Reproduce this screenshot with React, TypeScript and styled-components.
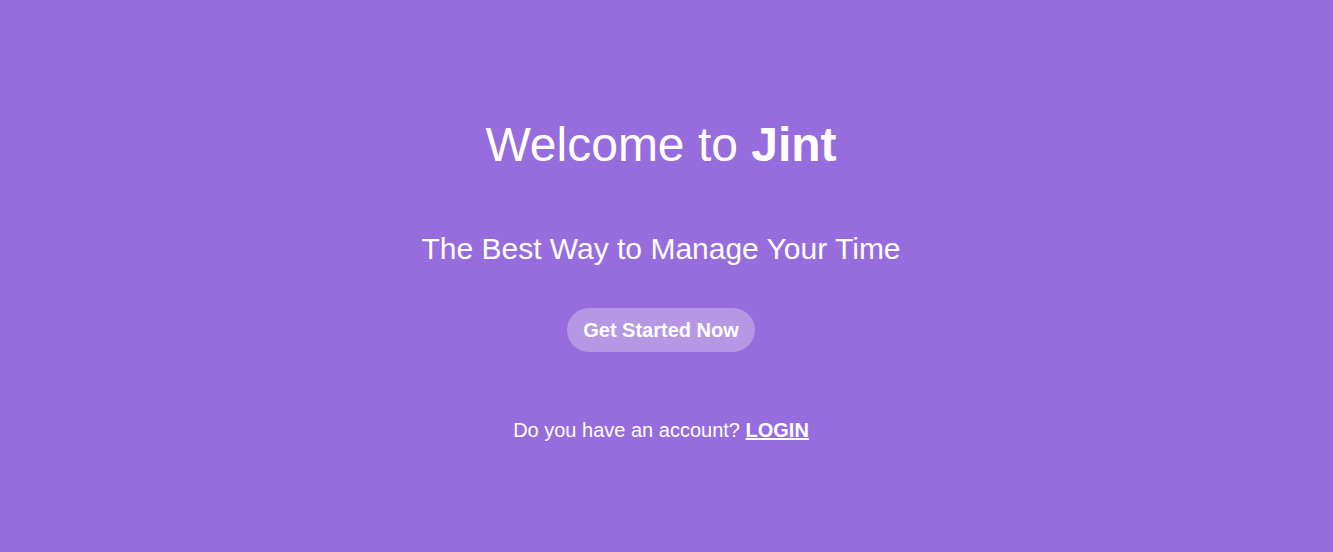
import React from "react";
import styled, { createGlobalStyle } from "styled-components";

const Global = createGlobalStyle`
  html, body { margin: 0; padding: 0; }
  body { background: #976cdd; font-family: "Liberation Sans", Arial, sans-serif; }
`;

const Page = styled.main`
  box-sizing: border-box;
  min-height: 552px;
  padding: 117px 11px 0 0;
  display: flex;
  flex-direction: column;
  align-items: center;
  color: #ffffff;
  background: #976cdd;
`;

const Title = styled.h1`
  margin: 0;
  font-size: 48px;
  font-weight: 400;
  line-height: 56px;
`;

const Brand = styled.strong`
  font-weight: 700;
`;

const Subtitle = styled.h2`
  margin: 58px 0 0;
  font-size: 30px;
  font-weight: 400;
  line-height: 36px;
`;

const StartButton = styled.button`
  margin-top: 41px;
  height: 44px;
  padding: 0 16px;
  border: none;
  border-radius: 22px;
  background: #b597e4;
  color: #ffffff;
  font-family: "Liberation Sans", Arial, sans-serif;
  font-size: 20px;
  font-weight: 700;
  cursor: pointer;
`;

const Footer = styled.p`
  margin: 66px 0 0;
  font-size: 20px;
  line-height: 24px;
`;

const LoginLink = styled.a`
  color: #ffffff;
  font-weight: 700;
  text-decoration: underline;
`;

export default function App() {
  return (
    <>
      <Global />
      <Page>
        <Title>
          Welcome to <Brand>Jint</Brand>
        </Title>
        <Subtitle>The Best Way to Manage Your Time</Subtitle>
        <StartButton>Get Started Now</StartButton>
        <Footer>
          Do you have an account? <LoginLink href="#">LOGIN</LoginLink>
        </Footer>
      </Page>
    </>
  );
}
